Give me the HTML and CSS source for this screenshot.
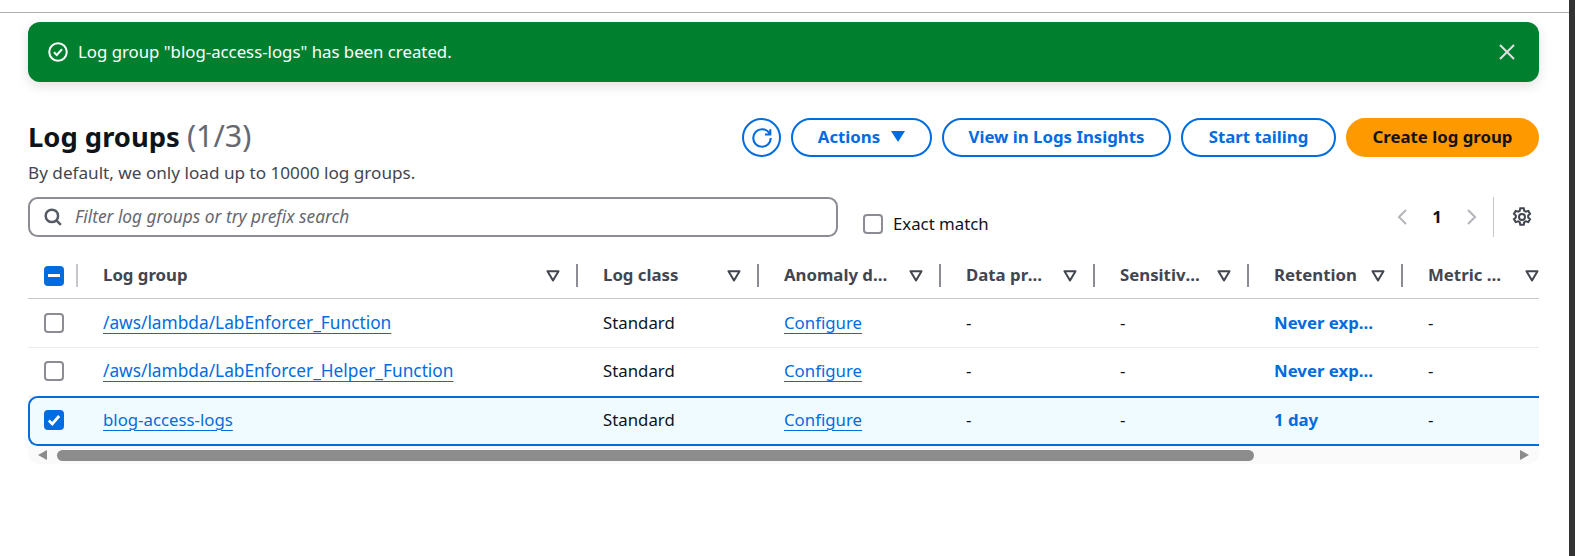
FILE: index.html
```html
<!DOCTYPE html>
<html>

<head>
    <title>Log groups</title>
    <link rel="stylesheet" href="styles.css">
</head>

<body>
    <div class="page">
        <main class="main">
            <div class="flash">
                <svg class="flash-icon" viewBox="0 0 16 16">
                    <circle cx="8" cy="8" r="7"></circle>
                    <path d="M4.8 8.2l2.2 2.2 4.2-4.6"></path>
                </svg>
                <span class="flash-text">Log group "blog-access-logs" has been created.</span>
                <svg class="flash-close" viewBox="0 0 16 16">
                    <path d="M1 1l14 14M15 1L1 15"></path>
                </svg>
            </div>

            <div class="header">
                <h1>Log groups <span class="count">(1/3)</span></h1>
                <div class="actions">
                    <button type="button" class="btn btn-icon">
                        <svg viewBox="0 0 16 16">
                            <path d="M15 8c0 3.87-3.13 7-7 7s-7-3.13-7-7 3.13-7 7-7c2.79 0 5.2 1.63 6.33 4"></path>
                            <path d="M14.6 1v4.2h-4.2"></path>
                        </svg>
                    </button>
                    <button type="button" class="btn btn-actions">Actions
                        <svg class="solid-caret" viewBox="0 0 14 11">
                            <path d="M0 0h14L7 11z"></path>
                        </svg>
                    </button>
                    <button type="button" class="btn btn-insights">View in Logs Insights</button>
                    <button type="button" class="btn btn-tail">Start tailing</button>
                    <button type="button" class="btn btn-primary">Create log group</button>
                </div>
            </div>
            <p class="subtitle">By default, we only load up to 10000 log groups.</p>

            <div class="filter-row">
                <div class="search">
                    <svg class="search-icon" viewBox="0 0 16 16">
                        <circle cx="7" cy="7" r="5.5"></circle>
                        <path d="M11 11l4 4"></path>
                    </svg>
                    <span class="placeholder">Filter log groups or try prefix search</span>
                </div>
                <label class="exact">
                    <span class="box"></span>
                    Exact match
                </label>
                <div class="pager">
                    <svg class="chevron" viewBox="0 0 12 18">
                        <path d="M10 2L3 9l7 7"></path>
                    </svg>
                    <span class="page-num">1</span>
                    <svg class="chevron" viewBox="0 0 12 18">
                        <path d="M2 2l7 7-7 7"></path>
                    </svg>
                </div>
                <div class="prefs">
                    <svg class="gear" viewBox="0 0 16 16">
                        <path d="M6.6 1h2.8l.4 2 1.3.75 1.95-.65 1.4 2.4-1.5 1.35v1.5l1.5 1.35-1.4 2.4-1.95-.65-1.3.75-.4 2H6.6l-.4-2-1.3-.75-1.95.65-1.4-2.4 1.5-1.35v-1.5L1.55 5.5l1.4-2.4 1.95.65 1.3-.75z"></path>
                        <circle cx="8" cy="8" r="2.4"></circle>
                    </svg>
                </div>
            </div>

            <div class="table">
                <div class="row head">
                    <div class="cell-head check-head"><span class="box box-on"><i class="dash"></i></span></div>
                    <div class="cell-head"><span class="label">Log group</span><svg class="caret" viewBox="0 0 14 12"><path d="M1.5 1.2h11L7 10.5z"></path></svg></div>
                    <div class="cell-head"><span class="label">Log class</span><svg class="caret" viewBox="0 0 14 12"><path d="M1.5 1.2h11L7 10.5z"></path></svg></div>
                    <div class="cell-head"><span class="label">Anomaly detection</span><svg class="caret" viewBox="0 0 14 12"><path d="M1.5 1.2h11L7 10.5z"></path></svg></div>
                    <div class="cell-head"><span class="label">Data protection</span><svg class="caret" viewBox="0 0 14 12"><path d="M1.5 1.2h11L7 10.5z"></path></svg></div>
                    <div class="cell-head"><span class="label">Sensitive data count</span><svg class="caret" viewBox="0 0 14 12"><path d="M1.5 1.2h11L7 10.5z"></path></svg></div>
                    <div class="cell-head"><span class="label">Retention</span><svg class="caret" viewBox="0 0 14 12"><path d="M1.5 1.2h11L7 10.5z"></path></svg></div>
                    <div class="cell-head last"><span class="label">Metric filters</span><svg class="caret" viewBox="0 0 14 12"><path d="M1.5 1.2h11L7 10.5z"></path></svg></div>
                </div>

                <div class="row body-row">
                    <div class="check-cell"><span class="box"></span></div>
                    <div class="cell"><a class="link link-name">/aws/lambda/LabEnforcer_Function</a></div>
                    <div class="cell">Standard</div>
                    <div class="cell"><a class="link">Configure</a></div>
                    <div class="cell">-</div>
                    <div class="cell">-</div>
                    <div class="cell"><span class="retention">Never expire</span></div>
                    <div class="cell">-</div>
                </div>
                <div class="row body-row">
                    <div class="check-cell"><span class="box"></span></div>
                    <div class="cell"><a class="link link-name">/aws/lambda/LabEnforcer_Helper_Function</a></div>
                    <div class="cell">Standard</div>
                    <div class="cell"><a class="link">Configure</a></div>
                    <div class="cell">-</div>
                    <div class="cell">-</div>
                    <div class="cell"><span class="retention">Never expire</span></div>
                    <div class="cell">-</div>
                </div>
                <div class="row body-row selected">
                    <div class="check-cell">
                        <span class="box box-on">
                            <svg class="tick" viewBox="0 0 14 14"><path d="M2.5 7.5l3 3 6-7"></path></svg>
                        </span>
                    </div>
                    <div class="cell"><a class="link">blog-access-logs</a></div>
                    <div class="cell">Standard</div>
                    <div class="cell"><a class="link">Configure</a></div>
                    <div class="cell">-</div>
                    <div class="cell">-</div>
                    <div class="cell"><span class="retention">1 day</span></div>
                    <div class="cell">-</div>
                </div>
            </div>

            <div class="scrollbar">
                <span class="arrow arrow-left"></span>
                <span class="thumb"></span>
                <span class="arrow arrow-right"></span>
            </div>
        </main>
        <div class="edge"></div>
    </div>
</body>

</html>
```

FILE: styles.css
```css
* {
    box-sizing: border-box;
}

html,
body {
    height: 100%;
    margin: 0;
}

body {
    font-family: "Noto Sans", "Open Sans", sans-serif;
    font-size: 16.8px;
    line-height: 24px;
    color: #0f141a;
    background: #fff;
    overflow: hidden;
}

svg {
    display: block;
    flex: none;
    fill: none;
}

.page {
    display: flex;
    height: 100%;
}

.main {
    flex: 1;
    min-width: 0;
    padding: 12px 30px 0 28px;
}

.main::before {
    content: "";
    display: block;
    height: 1px;
    margin: 0 -30px 9px -28px;
    background: #b0b0b0;
}

.edge {
    width: 6px;
    background: #333;
}

/* flash banner */
.flash {
    display: flex;
    align-items: center;
    height: 60px;
    padding: 0 24px 0 20px;
    border-radius: 12px;
    background: #00802f;
    color: #fff;
    box-shadow: 0 4px 12px rgba(0, 7, 22, 0.12);
}

.flash-icon {
    width: 20px;
    height: 20px;
    stroke: #fff;
    stroke-width: 1.6;
}

.flash-text {
    flex: 1;
    margin-left: 10px;
}

.flash-close {
    width: 16px;
    height: 16px;
    stroke: #e0e0e0;
    stroke-width: 2;
}

/* header */
.header {
    display: flex;
    justify-content: space-between;
    align-items: center;
    margin-top: 36px;
    height: 39px;
}

h1 {
    margin: -3px 0 0;
    font-size: 27.4px;
    font-weight: 700;
    line-height: 30px;
}

.count {
    font-size: 30.4px;
    font-weight: 400;
    color: #656871;
}

.actions {
    display: flex;
    gap: 10px;
}

.btn {
    display: flex;
    align-items: center;
    justify-content: center;
    height: 39px;
    padding: 0 0 2px;
    border: 2px solid #006ce0;
    border-radius: 24px;
    background: #fff;
    color: #006ce0;
    font: 700 16.8px "Noto Sans", "Open Sans", sans-serif;
}

.btn-icon {
    width: 39px;
    padding: 0;
}

.btn-icon svg {
    width: 20px;
    height: 20px;
    stroke: #006ce0;
    stroke-width: 1.7;
}

.btn-actions {
    width: 141px;
    gap: 11px;
}

.solid-caret {
    width: 14px;
    height: 11px;
    fill: #006ce0;
}

.btn-insights {
    width: 229px;
}

.btn-tail {
    width: 155px;
}

.btn-primary {
    width: 193px;
    border-color: #ff9900;
    background: #ff9900;
    color: #0f141a;
}

.subtitle {
    margin: 4px 0 0;
    color: #424650;
    font-size: 17.15px;
    line-height: 24px;
    height: 24px;
}

/* filter row */
.filter-row {
    display: flex;
    align-items: center;
    margin-top: 12px;
    height: 40px;
}

.search {
    display: flex;
    align-items: center;
    width: 810px;
    height: 40px;
    padding-left: 14px;
    border: 2px solid #8c8c94;
    border-radius: 9.6px;
}

.search-icon {
    width: 18px;
    height: 18px;
    stroke: #545b64;
    stroke-width: 2.2;
}

.placeholder {
    margin-left: 13px;
    font-size: 17.3px;
    font-style: italic;
    color: #656871;
}

.exact {
    display: flex;
    align-items: center;
    gap: 10px;
    margin: 14px 0 0 25px;
}

.box {
    display: flex;
    align-items: center;
    justify-content: center;
    flex: none;
    width: 20px;
    height: 20px;
    border: 2px solid #8c8c94;
    border-radius: 4px;
    background: #fff;
}

.box-on {
    border-color: #006ce0;
    background: #006ce0;
}

.dash {
    display: block;
    width: 12px;
    height: 2.4px;
    background: #fff;
}

.tick {
    width: 16px;
    height: 16px;
    stroke: #fff;
    stroke-width: 2.4;
}

.pager {
    display: flex;
    align-items: center;
    margin-left: auto;
}

.chevron {
    width: 12px;
    height: 18px;
    stroke: #b4b4bb;
    stroke-width: 2;
}

.page-num {
    width: 58px;
    text-align: center;
    font-weight: 700;
}

.prefs {
    display: flex;
    align-items: center;
    height: 40px;
    margin-left: 15px;
    padding: 0 7px 0 18px;
    border-left: 1.5px solid #c6c6cd;
}

.gear {
    width: 20px;
    height: 20px;
    stroke: #424650;
    stroke-width: 1.6;
}

/* table */
.table {
    overflow: hidden;
}

.row {
    display: grid;
    grid-template-columns: 50px 500px 181px 182px 154px 154px 154px 1fr;
}

.head {
    height: 62px;
    border-bottom: 1.5px solid #c6c6cd;
    padding-top: 27px;
}

.cell-head {
    display: flex;
    align-items: center;
    gap: 12px;
    min-width: 0;
    height: 23px;
    padding: 0 16px 0 25px;
    border-right: 2px solid #8c8c94;
    font-weight: 700;
    color: #424650;
}

.cell-head.last {
    gap: 19px;
    border-right: 0;
    padding-right: 0;
}

.check-head {
    padding: 0 0 0 16px;
    border-right-color: #c6c6cd;
}

.label {
    flex: 1;
    min-width: 0;
    overflow: hidden;
    white-space: nowrap;
    text-overflow: ellipsis;
    margin-top: -2px;
}

.caret {
    width: 14px;
    height: 12px;
    stroke: #424650;
    stroke-width: 2;
    stroke-linejoin: round;
}

.body-row {
    height: 49px;
    border-bottom: 1px solid #ebebf0;
    align-items: center;
}

.body-row + .body-row {
    padding-bottom: 2px;
}

.check-cell {
    padding-left: 16px;
}

.cell {
    padding-left: 25px;
    padding-right: 26px;
    min-width: 0;
    white-space: nowrap;
}

.link {
    color: #006ce0;
    text-decoration: underline;
    text-decoration-thickness: 1px;
    text-underline-offset: 4px;
}

.link-name {
    font-size: 17.3px;
}

.retention {
    display: block;
    overflow: hidden;
    text-overflow: ellipsis;
    font-weight: 700;
    color: #006ce0;
}

.body-row.selected {
    height: 50px;
    margin-top: -1px;
    margin-right: -12px;
    padding-bottom: 3px;
    border-bottom: 0;
    border-radius: 9.6px;
    background: #f0fbff;
    box-shadow: inset 0 0 0 2px #006ce0;
}

/* scrollbar */
.scrollbar {
    display: flex;
    align-items: center;
    height: 18px;
    padding: 0 10px;
    border-radius: 0 0 10px 10px;
    background: #fafafa;
}

.thumb {
    width: 1197px;
    height: 11px;
    margin-left: 10px;
    border-radius: 6px;
    background: #8c8c8c;
}

.arrow {
    width: 0;
    height: 0;
    border-top: 5.5px solid transparent;
    border-bottom: 5.5px solid transparent;
}

.arrow-left {
    border-right: 9px solid #8c8c8c;
}

.arrow-right {
    margin-left: auto;
    border-left: 9px solid #8c8c8c;
}
```
